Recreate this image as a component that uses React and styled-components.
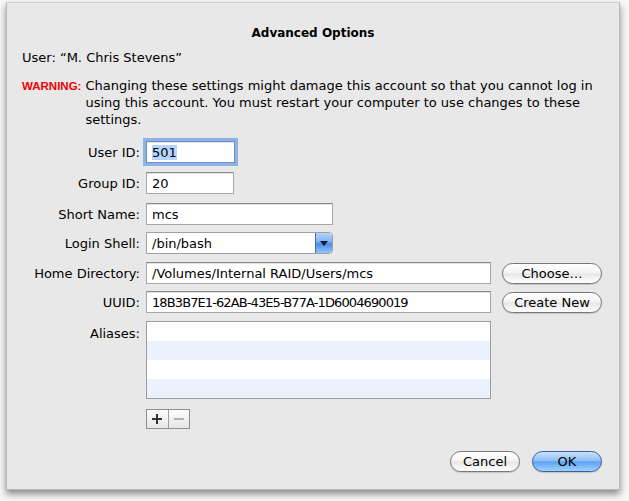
import React from 'react';
import styled, { createGlobalStyle } from 'styled-components';

const GlobalStyle = createGlobalStyle`
  html, body {
    margin: 0;
    padding: 0;
    background: #f7f7f7;
  }
  body {
    font-family: "DejaVu Sans", "Liberation Sans", sans-serif;
    font-size: 13px;
    color: #000;
  }
`;

const Page = styled.div`
  width: 629px;
  height: 501px;
  padding: 2px 0 0 6px;
  box-sizing: border-box;
`;

const Window = styled.div`
  width: 614px;
  height: 488px;
  box-sizing: border-box;
  background: #e8e8e8;
  border: 1px solid #b9b9b9;
  border-top-color: #d0d0d0;
  box-shadow: 0 4px 7px rgba(0, 0, 0, 0.45);
  padding: 0 0 0 15px;
  display: flex;
  flex-direction: column;
`;

const Title = styled.div`
  font-weight: bold;
  font-size: 12px;
  text-align: center;
  margin: 22px 15px 0 0;
  height: 16px;
  line-height: 16px;
`;

const UserLine = styled.div`
  margin-top: 9px;
  line-height: 16px;
`;

const Warning = styled.div`
  display: flex;
  align-items: baseline;
  margin-top: 11px;
  line-height: 17px;
`;

const WarnLabel = styled.span`
  color: #f00000;
  font-family: "Liberation Sans", Arial, sans-serif;
  font-weight: bold;
  font-size: 11.5px;
  margin-right: 4px;
  flex: none;
  white-space: nowrap;
`;

const WarnText = styled.span`
  width: 515px;
`;

const Form = styled.div`
  display: flex;
  flex-direction: column;
  margin-top: 13px;
`;

const Row = styled.div`
  display: flex;
  align-items: ${({ $top }) => ($top ? 'flex-start' : 'center')};
  margin-top: ${({ $mt }) => $mt || 0}px;
`;

const Label = styled.div`
  width: 124px;
  text-align: right;
  padding-right: 6px;
  box-sizing: border-box;
  flex: none;
  white-space: nowrap;
  ${({ $top }) => $top && 'padding-top: 5px;'}
`;

const Field = styled.div`
  width: ${({ $w }) => $w}px;
  height: 22px;
  box-sizing: border-box;
  background: #fff;
  border: 1px solid #a8a8a8;
  border-top-color: #8a8a8a;
  box-shadow: inset 0 1px 0 #e2e2e2;
  padding: 0 5px;
  display: flex;
  align-items: center;
  white-space: nowrap;
  letter-spacing: ${({ $tight }) => ($tight ? '-0.9px' : 'normal')};
  ${({ $focus }) =>
    $focus &&
    `
    outline: 3px solid #8db2e3;
    outline-offset: 0;
    border-color: #6b8fc7;
  `}
`;

const Selected = styled.span`
  background: #b5d5ff;
`;

const Popup = styled.div`
  width: 187px;
  height: 22px;
  box-sizing: border-box;
  background: #fff;
  border: 1px solid #a0a0a0;
  border-radius: 0 4px 4px 0;
  display: flex;
  align-items: center;
  overflow: hidden;
`;

const PopupText = styled.div`
  flex: 1;
  padding-left: 5px;
`;

const PopupArrow = styled.div`
  width: 16px;
  height: 100%;
  background: linear-gradient(#b7d6f9 0%, #7bb0ee 45%, #4a8be6 55%, #92c6fb 100%);
  border-left: 1px solid #4d6fa8;
  display: flex;
  align-items: center;
  justify-content: center;
`;

const AquaButton = styled.button`
  font-family: "DejaVu Sans", "Liberation Sans", sans-serif;
  font-size: 13px;
  color: #000;
  width: ${({ $w }) => $w}px;
  height: 21px;
  border-radius: 11px;
  border: 1px solid ${({ $blue }) => ($blue ? '#3a5fa0' : '#777')};
  background: ${({ $blue }) =>
    $blue
      ? 'linear-gradient(#c9e2fd 0%, #8ec0f7 45%, #5fa2f2 52%, #9fd2ff 100%)'
      : 'linear-gradient(#ffffff 0%, #f4f4f4 45%, #e6e6e6 52%, #ffffff 100%)'};
  box-shadow: 0 1px 1px rgba(0, 0, 0, 0.15);
  padding: 0;
  display: flex;
  align-items: center;
  justify-content: center;
`;

const Side = styled.div`
  margin-left: 11px;
`;

const List = styled.div`
  width: 345px;
  height: 78px;
  box-sizing: border-box;
  border: 1px solid #9c9c9c;
  background: #fff;
  display: flex;
  flex-direction: column;
  overflow: hidden;
`;

const ListRow = styled.div`
  height: 19px;
  flex: none;
  background: ${({ $alt }) => ($alt ? '#ebf2fe' : '#fff')};
`;

const PlusMinus = styled.div`
  display: flex;
  margin: 10px 0 0 124px;
  width: 44px;
  height: 20px;
  box-sizing: border-box;
  border: 1px solid #8e8e8e;
`;

const PMButton = styled.div`
  flex: 1;
  display: flex;
  align-items: center;
  justify-content: center;
  background: linear-gradient(#fdfdfd 0%, #f2f2f2 50%, #e6e6e6 100%);
  & + & {
    border-left: 1px solid #9e9e9e;
  }
`;

const Footer = styled.div`
  display: flex;
  justify-content: flex-end;
  gap: 12px;
  margin: 22px 17px 0 0;
`;

const ArrowIcon = () => (
  <svg width="8" height="5" viewBox="0 0 8 5">
    <path d="M0 0 H8 L4 5 Z" fill="#0c1a33" />
  </svg>
);

const PlusIcon = ({ color }) => (
  <svg width="10" height="10" viewBox="0 0 10 10">
    <path d="M4 0 H6 V4 H10 V6 H6 V10 H4 V6 H0 V4 H4 Z" fill={color} />
  </svg>
);

const MinusIcon = ({ color }) => (
  <svg width="10" height="10" viewBox="0 0 10 10">
    <rect x="0" y="4" width="10" height="2" fill={color} />
  </svg>
);

const App = () => {
  return (
    <Page>
      <GlobalStyle />
      <Window>
        <Title>Advanced Options</Title>
        <UserLine>User: “M. Chris Stevens”</UserLine>
        <Warning>
          <WarnLabel>WARNING:</WarnLabel>
          <WarnText>
            Changing these settings might damage this account so that you cannot log in using this
            account. You must restart your computer to use changes to these settings.
          </WarnText>
        </Warning>

        <Form>
          <Row>
            <Label>User ID:</Label>
            <Field $w={89} $focus>
              <Selected>501</Selected>
            </Field>
          </Row>
          <Row $mt={9}>
            <Label>Group ID:</Label>
            <Field $w={88}>20</Field>
          </Row>
          <Row $mt={9}>
            <Label>Short Name:</Label>
            <Field $w={187}>mcs</Field>
          </Row>
          <Row $mt={7}>
            <Label>Login Shell:</Label>
            <Popup>
              <PopupText>/bin/bash</PopupText>
              <PopupArrow>
                <ArrowIcon />
              </PopupArrow>
            </Popup>
          </Row>
          <Row $mt={8}>
            <Label>Home Directory:</Label>
            <Field $w={345}>/Volumes/Internal RAID/Users/mcs</Field>
            <Side>
              <AquaButton $w={100}>Choose…</AquaButton>
            </Side>
          </Row>
          <Row $mt={7}>
            <Label>UUID:</Label>
            <Field $w={345} $tight>
              18B3B7E1-62AB-43E5-B77A-1D6004690019
            </Field>
            <Side>
              <AquaButton $w={100}>Create New</AquaButton>
            </Side>
          </Row>
          <Row $mt={8} $top>
            <Label $top>Aliases:</Label>
            <List>
              <ListRow />
              <ListRow $alt />
              <ListRow />
              <ListRow $alt />
            </List>
          </Row>
          <PlusMinus>
            <PMButton>
              <PlusIcon color="#333" />
            </PMButton>
            <PMButton>
              <MinusIcon color="#b0b0b0" />
            </PMButton>
          </PlusMinus>
        </Form>

        <Footer>
          <AquaButton $w={70}>Cancel</AquaButton>
          <AquaButton $w={70} $blue>
            OK
          </AquaButton>
        </Footer>
      </Window>
    </Page>
  );
};

export default App;
